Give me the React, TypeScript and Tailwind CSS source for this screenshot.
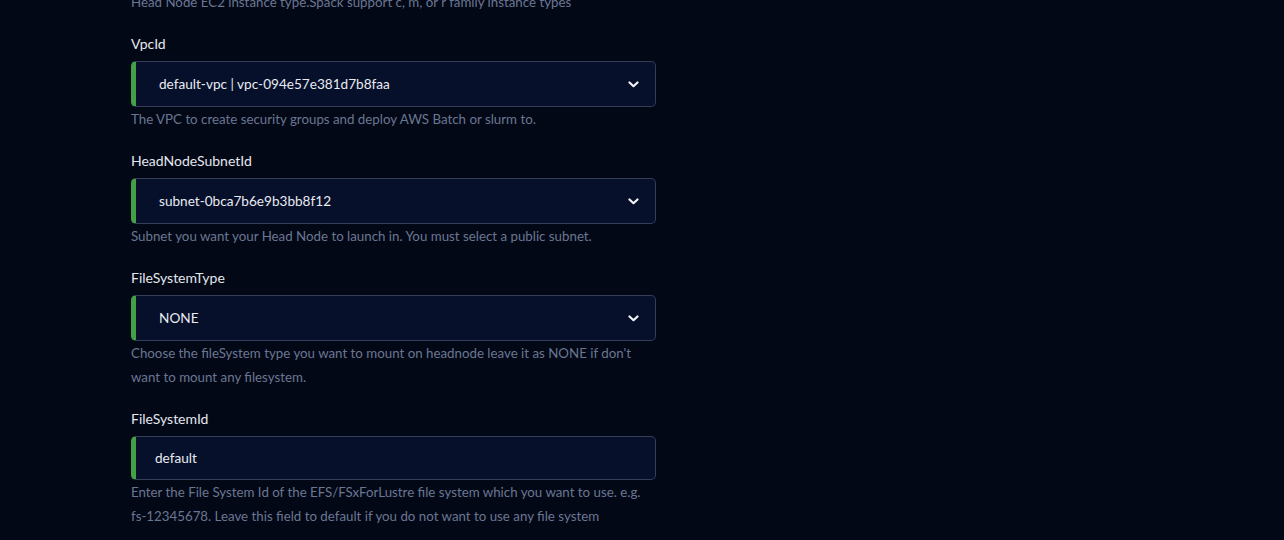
import { ReactNode } from "react"

type FieldProps = {
  label: string
  help: ReactNode
  children: ReactNode
}

const Field = ({ label, help, children }: FieldProps) => {
  return (
    <div className="flex flex-col mb-5">
      <label className="text-[14px] leading-5 text-[#e4e7ee]">{label}</label>
      <div className="mt-[7px]">{children}</div>
      <p className="text-[13.3px] leading-6 text-[#6a7793]">{help}</p>
    </div>
  )
}

const Chevron = () => (
  <svg width="11" height="7" viewBox="0 0 11 7" fill="none">
    <path d="M1.5 1.5 L5.5 5.2 L9.5 1.5" stroke="#f3f4f6" strokeWidth="2.2" strokeLinecap="round" strokeLinejoin="round" />
  </svg>
)

const SelectBox = ({ value }: { value: string }) => {
  return (
    <div className="h-[46px] flex items-center justify-between rounded-[5px] border border-[#343e5a] border-l-[5px] border-l-[#43a047] bg-[#07102a] pl-[23px] pr-[16px]">
      <span className="text-[13.6px] text-[#e8ebf2]">{value}</span>
      <Chevron />
    </div>
  )
}

const InputBox = ({ value }: { value: string }) => {
  return (
    <div className="h-[44px] flex items-center rounded-[5px] border border-[#343e5a] border-l-[5px] border-l-[#43a047] bg-[#07102a] pl-[19px]">
      <span className="text-[13.6px] text-[#e8ebf2]">{value}</span>
    </div>
  )
}

export default function App() {
  return (
    <main className="w-full h-[540px] overflow-hidden bg-[#030816]" style={{ fontFamily: "Lato, 'Noto Sans', sans-serif" }}>
      <section className="w-[525px] ml-[131px] -mt-[10px] flex flex-col">
        <p className="text-[13.3px] leading-6 text-[#6a7793] mb-5">
          Head Node EC2 instance type.Spack support c, m, or r family instance types
        </p>

        <Field label="VpcId" help="The VPC to create security groups and deploy AWS Batch or slurm to.">
          <SelectBox value="default-vpc | vpc-094e57e381d7b8faa" />
        </Field>

        <Field label="HeadNodeSubnetId" help="Subnet you want your Head Node to launch in. You must select a public subnet.">
          <SelectBox value="subnet-0bca7b6e9b3bb8f12" />
        </Field>

        <Field
          label="FileSystemType"
          help="Choose the fileSystem type you want to mount on headnode leave it as NONE if don't want to mount any filesystem."
        >
          <SelectBox value="NONE" />
        </Field>

        <Field
          label="FileSystemId"
          help="Enter the File System Id of the EFS/FSxForLustre file system which you want to use. e.g. fs-12345678. Leave this field to default if you do not want to use any file system"
        >
          <InputBox value="default" />
        </Field>
      </section>
    </main>
  )
}
